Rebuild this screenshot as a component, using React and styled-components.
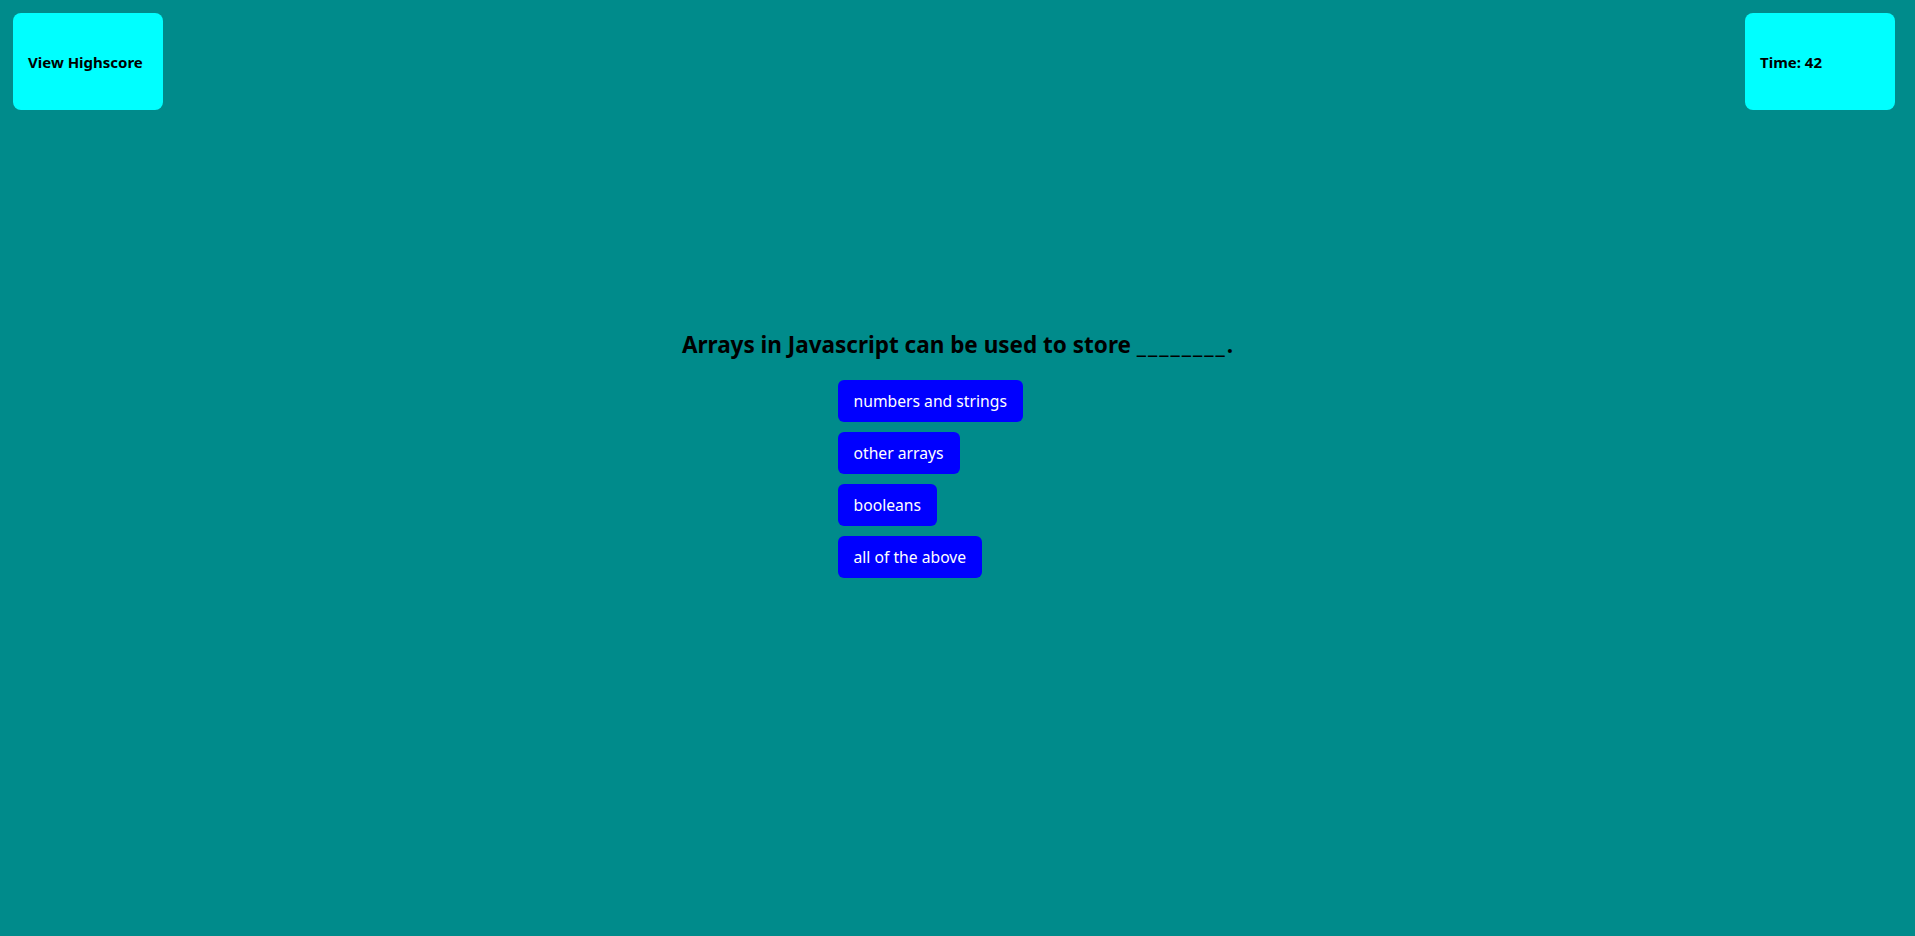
import styled, { createGlobalStyle } from 'styled-components';

const GlobalStyle = createGlobalStyle`
	html, body {
		margin: 0;
		padding: 0;
		height: 100%;
	}
	body {
		background: #008b8b;
		font-family: 'Segoe UI', 'Noto Sans', sans-serif;
		color: #000;
	}
	#root {
		min-height: 100vh;
	}
`;

const Page = styled.div`
	min-height: 100vh;
	padding: 13px 20px 0 13px;
	box-sizing: border-box;
`;

const TopBar = styled.header`
	display: flex;
	justify-content: space-between;
	align-items: flex-start;
`;

const InfoBox = styled.div`
	width: 150px;
	height: 97px;
	box-sizing: border-box;
	padding-left: 15px;
	display: flex;
	align-items: center;
	background: #00ffff;
	border-radius: 8px;
	font-size: 15px;
	font-weight: 700;
	cursor: ${props => (props.clickable ? 'pointer' : 'default')};
`;

const Main = styled.main`
	display: flex;
	justify-content: center;
	margin-left: -13px;
	margin-right: -20px;
	margin-top: 220px;
`;

const Quiz = styled.section`
	display: flex;
	flex-direction: column;
	align-items: center;
`;

const Question = styled.h2`
	margin: 0 0 20px 0;
	font-size: 22.5px;
	font-weight: 700;
	line-height: 30px;
`;

const Blank = styled.span`
	letter-spacing: 2px;
`;

const Answers = styled.div`
	width: 240px;
	display: flex;
	flex-direction: column;
	align-items: flex-start;
	gap: 10px;
`;

const AnswerButton = styled.button`
	height: 42px;
	padding: 0 16px;
	border: none;
	border-radius: 6px;
	background: #0000ff;
	color: #fff;
	font-family: inherit;
	font-size: 15.7px;
	cursor: pointer;
`;

const answers = ['numbers and strings', 'other arrays', 'booleans', 'all of the above'];

export default function App() {
	return (
		<>
			<GlobalStyle />
			<Page>
				<TopBar>
					<InfoBox clickable>View Highscore</InfoBox>
					<InfoBox>Time: 42</InfoBox>
				</TopBar>
				<Main>
					<Quiz>
						<Question>
							Arrays in Javascript can be used to store <Blank>________</Blank>.
						</Question>
						<Answers>
							{answers.map(a => (
								<AnswerButton key={a}>{a}</AnswerButton>
							))}
						</Answers>
					</Quiz>
				</Main>
			</Page>
		</>
	);
}
